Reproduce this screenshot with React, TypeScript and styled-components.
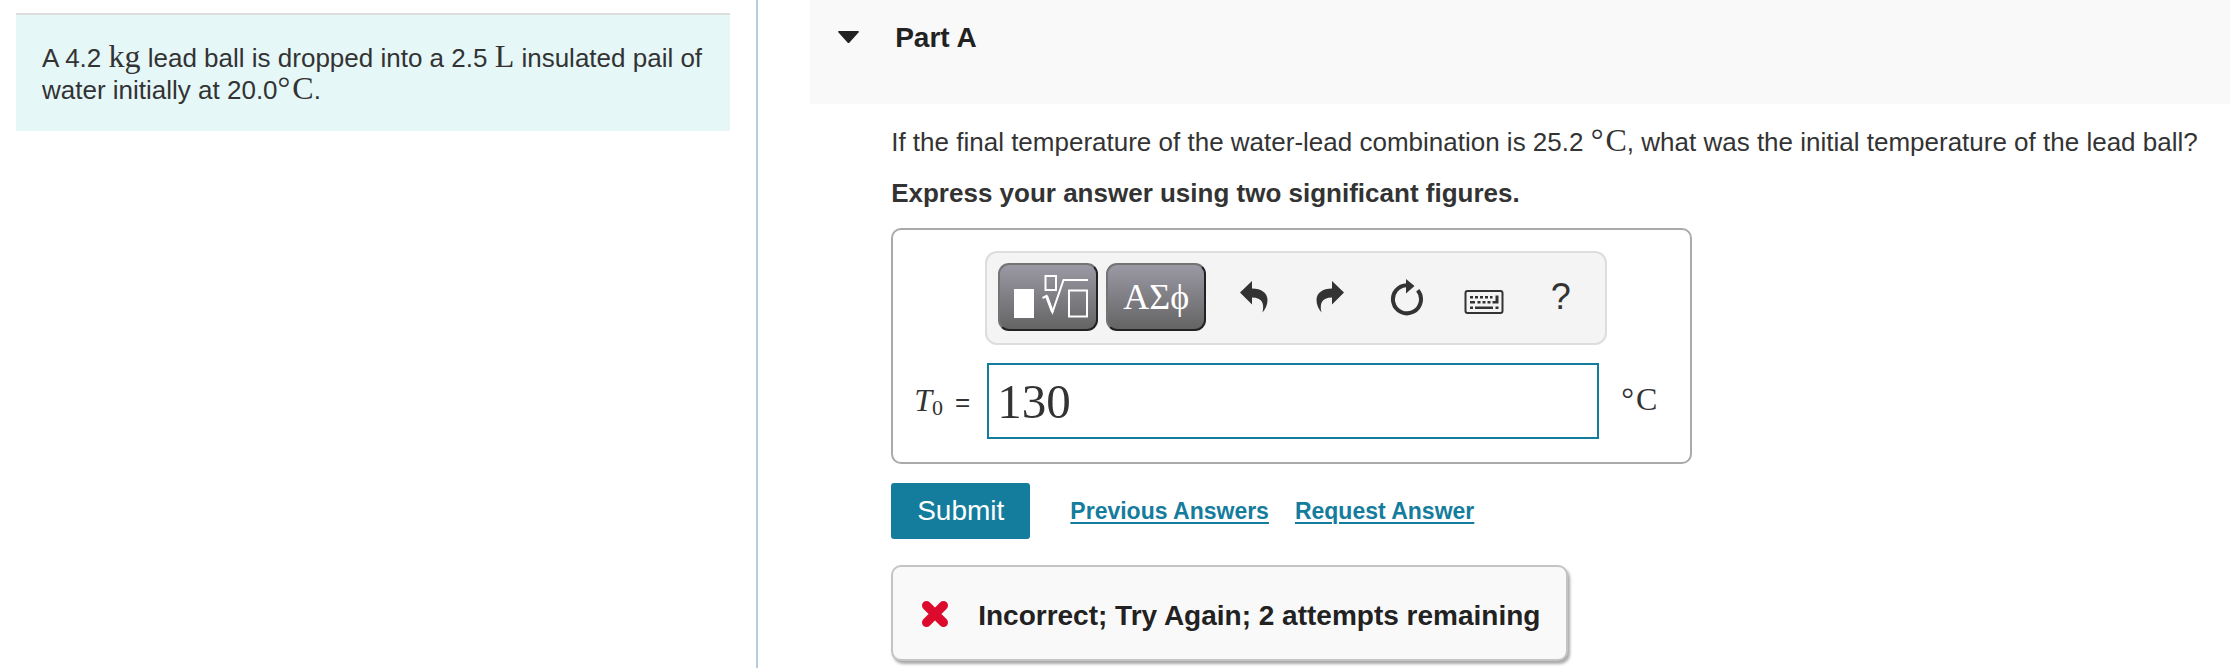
import React from "react";
import styled, { createGlobalStyle } from "styled-components";

const GlobalStyle = createGlobalStyle`
  * { box-sizing: border-box; }
  body {
    margin: 0;
    background: #fff;
    color: #333;
    font-family: "Liberation Sans", Arial, sans-serif;
    font-size: 26px;
    line-height: 32px;
  }
  #root { display: flex; min-height: 100vh; }
`;

const Page = styled.div`
  display: flex;
  flex: 1;
`;

const Sidebar = styled.aside`
  flex: 0 0 34%;
  padding: 13px 26px 0 16px;
  border-right: 2px solid #b9cbe0;
`;

const Intro = styled.p`
  margin: 0;
  padding: 27px 24px 25px 26px;
  border-top: 2px solid #ddd;
  background: #e6f7f8;
`;

const MathText = styled.span`
  font-family: "Liberation Serif", "Times New Roman", serif;
  font-size: 32px;
  line-height: 28px;
`;

const Degree = styled(MathText)`
  margin-right: 2px;
`;

const Main = styled.main`
  flex: 1;
  min-width: 0;
  padding-left: 52px;
`;

const PartHeader = styled.header`
  display: flex;
  align-items: flex-start;
  padding: 22px 28px 50px;
  background: #f9f9f9;
`;

const Toggle = styled.button`
  display: flex;
  align-items: center;
  width: 57px;
  height: 30px;
  padding: 0;
  border: 0;
  background: none;
`;

const PartTitle = styled.h2`
  margin: 0;
  color: #222;
  font-size: 28px;
  line-height: 32px;
`;

const PartBody = styled.div`
  padding: 22px 0 6px 81px;
`;

const Question = styled.p`
  margin: 0 0 19px;
`;

const Instruction = styled.p`
  margin: 0 0 19px;
  font-weight: bold;
`;

const AnswerCard = styled.section`
  max-width: 801px;
  padding: 21px 20px 23px 21px;
  border: 2px solid #aaa;
  border-radius: 10px;
`;

const Toolbar = styled.div`
  display: flex;
  align-items: flex-start;
  gap: 8px;
  margin: 0 63px 18px 71px;
  padding: 10px 0 12px 11px;
  border: 2px solid #ddd;
  border-radius: 12px;
  background: #f4f4f4;
`;

const PaletteButton = styled.button`
  display: flex;
  flex: 0 0 100px;
  align-items: center;
  justify-content: center;
  height: 68px;
  padding: 0;
  border: 2px solid;
  border-color: #747474 #222 #222 #747474;
  border-radius: 11px;
  background: linear-gradient(#9b99a4, #646464);
  color: #fff;
  font: 36px/58px "Liberation Serif", serif;
`;

const IconGroup = styled.div`
  display: flex;
  flex: 1;
`;

const IconButton = styled.button`
  display: flex;
  flex: 0 0 77px;
  align-items: center;
  justify-content: center;
  height: 68px;
  padding: 0;
  border: 0;
  background: none;
  color: #333;
  font: 36px/68px "Liberation Sans", sans-serif;
`;

const AnswerRow = styled.div`
  display: flex;
  align-items: center;
`;

const AnswerLabel = styled.label`
  flex: 0 0 73px;
  padding-top: 2px;
  white-space: nowrap;
`;

const Variable = styled(MathText)`
  font-style: italic;
`;

const Subscript = styled.sub`
  margin-right: 12px;
  font: 22px/22px "Liberation Serif", serif;
  vertical-align: -4px;
`;

const AnswerInput = styled.input`
  flex: 1;
  min-width: 0;
  height: 76px;
  padding: 0 8px;
  border: 2px solid #147c9c;
  border-radius: 0;
  outline: 0;
  background: #fff;
  color: #333;
  font: 49px/72px "Liberation Serif", serif;
`;

const Unit = styled.span`
  flex: 0 0 71px;
  padding-left: 22px;
  white-space: nowrap;
`;

const Actions = styled.div`
  display: flex;
  align-items: center;
  gap: 26px;
  margin: 19px 0 26px;
`;

const SubmitButton = styled.button`
  height: 56px;
  margin-right: 14px;
  padding: 0 26px;
  border: 0;
  border-radius: 3px;
  background: #147c9c;
  color: #fff;
  font: 28px/56px "Liberation Sans", sans-serif;
`;

const ActionLink = styled.a`
  color: #147c9c;
  font-size: 23px;
  font-weight: bold;
  text-decoration-thickness: 2px;
  text-underline-offset: 3px;
`;

const Feedback = styled.div`
  display: flex;
  align-items: center;
  gap: 29px;
  width: fit-content;
  height: 96px;
  padding: 6px 26px 0 28px;
  border: 2px solid #c4c4c4;
  border-radius: 10px;
  background: #f9f9f9;
  box-shadow: 2px 3px 3px #aaa;
  color: #222;
  font-size: 28px;
  font-weight: bold;
`;

const CrossIcon = styled.svg`
  flex: none;
  margin-bottom: 4px;
`;

const arrowPath =
  "M7 15.5 19 4V11.5C28.5 11.5 34.5 16 34.5 23C34.5 28 32.5 32 29.5 35.5C31.5 27 29.5 20.5 19 20.5V27.5Z";

const UndoIcon = () => (
  <svg width="40" height="40" fill="currentColor" aria-hidden="true">
    <path d={arrowPath} />
  </svg>
);

const RedoIcon = () => (
  <svg width="40" height="40" fill="currentColor" aria-hidden="true">
    <path d={arrowPath} transform="matrix(-1 0 0 1 41 0)" />
  </svg>
);

const ResetIcon = () => (
  <svg width="40" height="40" aria-hidden="true">
    <path d="M30.7 13.3A14 14 0 1 1 20 8.3" fill="none" stroke="currentColor" strokeWidth="4" />
    <path d="M19 2 27.5 9 19 16.5Z" fill="currentColor" />
  </svg>
);

const KeyboardIcon = () => (
  <svg width="40" height="40" fill="currentColor" aria-hidden="true">
    <rect x="1.5" y="14" width="37" height="22" rx="2" fill="none" stroke="currentColor" strokeWidth="2" />
    <path d="M6 19h3v2.5H6zM11 19h3v2.5h-3zM16 19h3v2.5h-3zM21 19h3v2.5h-3zM26 19h2.5v2.5H26z" />
    <path d="M6 24h5v2.5H6zM13.5 24h3v2.5h-3zM18.5 24h3v2.5h-3zM23.5 24h3v2.5h-3zM31.5 18.5h3v8h-6V24h3z" />
    <path d="M6 29.5h3V32H6zM11 29.5h18V32H11zM31.5 29.5h3V32h-3z" />
  </svg>
);

const TemplateIcon = () => (
  <svg width="96" height="64" fill="none" stroke="#fff" strokeWidth="2" aria-hidden="true">
    <rect x="14" y="24" width="20" height="29" fill="#fff" stroke="none" />
    <rect x="45.5" y="11" width="10.5" height="14" />
    <path d="M42.5 33 46.5 31 52.5 47 63.5 15H88" />
    <path d="M46.5 31 52.5 47" strokeWidth="3" />
    <rect x="69" y="25.5" width="18" height="26" />
  </svg>
);

const palettes = [
  { label: "Templates", content: <TemplateIcon /> },
  { label: "Symbols", content: "ΑΣϕ" },
];

const tools = [
  { label: "Undo", content: <UndoIcon /> },
  { label: "Redo", content: <RedoIcon /> },
  { label: "Reset", content: <ResetIcon /> },
  { label: "Keyboard shortcuts", content: <KeyboardIcon /> },
  { label: "Help", content: "?" },
];

const Celsius = () => (
  <>
    <Degree>°</Degree>
    <MathText>C</MathText>
  </>
);

export default function App() {
  return (
    <>
      <GlobalStyle />
      <Page>
        <Sidebar>
          <Intro>
            A 4.2 <MathText>kg</MathText> lead ball is dropped into a 2.5 <MathText>L</MathText> insulated pail
            of water initially at 20.0<Celsius />.
          </Intro>
        </Sidebar>
        <Main>
          <PartHeader>
            <Toggle type="button" aria-label="Collapse Part A" aria-expanded="true">
              <svg width="21" height="12" fill="#222" aria-hidden="true">
                <path d="M1 0H20Q21.5 0 20.5 1.5L11.5 11.5Q10.5 12.5 9.5 11.5L.5 1.5Q-.5 0 1 0Z" />
              </svg>
            </Toggle>
            <PartTitle>Part A</PartTitle>
          </PartHeader>
          <PartBody>
            <Question>
              If the final temperature of the water-lead combination is 25.2 <Celsius />, what was the initial
              temperature of the lead ball?
            </Question>
            <Instruction>Express your answer using two significant figures.</Instruction>
            <AnswerCard>
              <Toolbar role="toolbar" aria-label="Equation tools">
                {palettes.map((item) => (
                  <PaletteButton key={item.label} type="button" aria-label={item.label}>
                    {item.content}
                  </PaletteButton>
                ))}
                <IconGroup>
                  {tools.map((item) => (
                    <IconButton key={item.label} type="button" aria-label={item.label}>
                      {item.content}
                    </IconButton>
                  ))}
                </IconGroup>
              </Toolbar>
              <AnswerRow>
                <AnswerLabel htmlFor="answer">
                  <Variable>T</Variable>
                  <Subscript>0</Subscript>=
                </AnswerLabel>
                <AnswerInput id="answer" type="text" defaultValue="130" />
                <Unit>
                  <Celsius />
                </Unit>
              </AnswerRow>
            </AnswerCard>
            <Actions>
              <SubmitButton type="button">Submit</SubmitButton>
              <ActionLink href="#previous">Previous Answers</ActionLink>
              <ActionLink href="#request">Request Answer</ActionLink>
            </Actions>
            <Feedback role="status">
              <CrossIcon width="28" height="28" viewBox="0 0 28 28" aria-hidden="true">
                <path d="M5.5 5.5 22.5 22.5M22.5 5.5 5.5 22.5" stroke="#dc0a2d" strokeWidth="9" strokeLinecap="round" />
              </CrossIcon>
              Incorrect; Try Again; 2 attempts remaining
            </Feedback>
          </PartBody>
        </Main>
      </Page>
    </>
  );
}
